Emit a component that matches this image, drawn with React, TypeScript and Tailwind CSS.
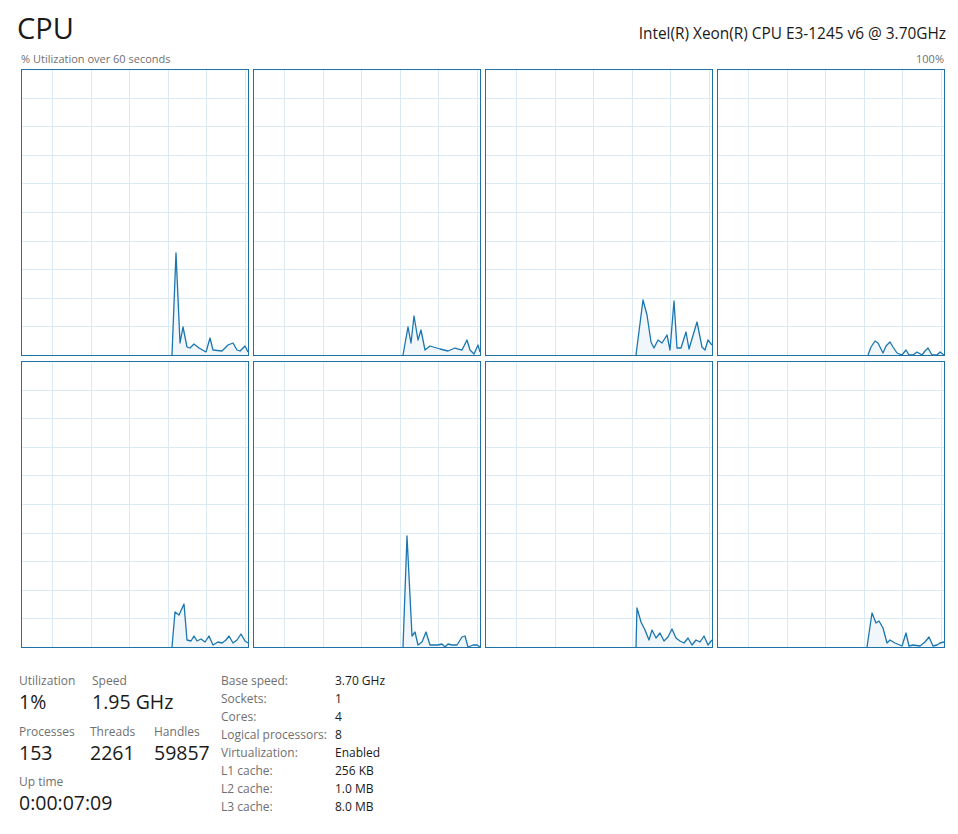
import React from 'react';

type Pt = [number, number];

const graphs: Pt[][] = [
  [[151,286],[155,184],[159,274],[162,258],[166,278],[169,279],[173,275],[178,279],[185,283],[189,269],[192,281],[201,282],[207,276],[212,274],[216,281],[219,282],[224,277],[227,283]],
  [[150,286],[155,258],[158,274],[161,247],[165,271],[168,261],[172,281],[177,277],[187,280],[195,282],[202,279],[209,281],[214,271],[217,281],[221,285],[225,276],[227,283]],
  [[151,286],[158,231],[162,246],[166,273],[169,279],[173,271],[177,274],[182,266],[185,281],[189,232],[192,279],[196,279],[201,263],[204,280],[212,253],[217,278],[220,281],[223,271],[227,276]],
  [[151,286],[154,278],[158,272],[161,274],[166,284],[169,277],[173,273],[176,278],[180,284],[185,286],[189,281],[192,286],[196,286],[200,283],[205,286],[208,282],[211,279],[215,286],[220,286],[223,283],[227,286]],
  [[151,286],[154,251],[158,254],[163,243],[166,279],[170,280],[173,275],[176,280],[180,278],[184,281],[188,275],[192,284],[197,281],[201,282],[205,279],[208,275],[212,282],[216,279],[220,273],[224,280],[227,282]],
  [[150,286],[154,175],[159,275],[162,271],[165,284],[169,281],[173,271],[177,284],[185,284],[189,283],[192,286],[195,283],[199,284],[204,284],[209,276],[212,275],[215,286],[220,284],[224,284],[227,286]],
  [[151,286],[152,247],[156,261],[160,269],[164,279],[167,269],[171,277],[175,272],[179,280],[183,276],[187,268],[191,277],[195,280],[199,282],[203,277],[207,284],[211,279],[215,281],[219,275],[223,284],[227,279]],
  [[150,286],[155,252],[159,262],[162,260],[166,267],[170,282],[173,279],[178,282],[185,285],[189,272],[192,285],[196,284],[203,285],[208,281],[212,276],[216,285],[220,284],[223,282],[227,281]],
];

const vLines = [31, 69.6, 108.2, 146.8, 185.4, 224];
const hLines = [1, 2, 3, 4, 5, 6, 7, 8, 9].map((i) => i * 28.6);

function CoreGraph({ points }: { points: Pt[] }) {
  const line = points.map(([x, y]) => `${x},${y}`).join(' ');
  const area = `${points[0][0]},286 ${line} ${points[points.length - 1][0]},286`;
  return (
    <div className="h-[287px] w-[228px] border border-[#1f72a8] bg-white">
      <svg width="226" height="285" viewBox="1 1 226 285" className="block">
        {vLines.map((x) => (
          <line key={'v' + x} x1={Math.round(x) + 0.5} x2={Math.round(x) + 0.5} y1={0} y2={287} stroke="#d9eaf4" strokeWidth={1} />
        ))}
        {hLines.map((y) => (
          <line key={'h' + y} y1={Math.round(y) + 0.5} y2={Math.round(y) + 0.5} x1={0} x2={228} stroke="#d9eaf4" strokeWidth={1} />
        ))}
        <polygon points={area} fill="#f1f6fa" />
        <polyline points={line} fill="none" stroke="#1a76b0" strokeWidth={1.3} strokeLinejoin="round" />
      </svg>
    </div>
  );
}

function Stat({ label, value, w }: { label: string; value: string; w: string }) {
  return (
    <div className={w}>
      <div className="text-[12px] leading-[16px] text-[#707070]">{label}</div>
      <div className="text-[19.5px] leading-[26px] text-[#1a1a1a]">{value}</div>
    </div>
  );
}

const specs: [string, string][] = [
  ['Base speed:', '3.70 GHz'],
  ['Sockets:', '1'],
  ['Cores:', '4'],
  ['Logical processors:', '8'],
  ['Virtualization:', 'Enabled'],
  ['L1 cache:', '256 KB'],
  ['L2 cache:', '1.0 MB'],
  ['L3 cache:', '8.0 MB'],
];

export default function App() {
  return (
    <div className="h-[834px] w-[958px] overflow-hidden bg-white font-['Segoe_UI','Open_Sans',sans-serif] text-[#1a1a1a]">
      <div className="flex items-baseline justify-between pl-[17px] pr-[12px] pt-[10px]">
        <div className="text-[29px] leading-[36px]">CPU</div>
        <div className="text-[15.4px]">Intel(R) Xeon(R) CPU E3-1245 v6 @ 3.70GHz</div>
      </div>
      <div className="mt-[6px] flex justify-between pl-[21px] pr-[14px] text-[11px] leading-[14px] text-[#707070]">
        <span>% Utilization over 60 seconds</span>
        <span>100%</span>
      </div>
      <div className="mt-[3px] grid grid-cols-[repeat(4,228px)] gap-x-[4px] gap-y-[5px] pl-[21px]">
        {graphs.map((g, i) => (
          <CoreGraph key={i} points={g} />
        ))}
      </div>
      <div className="mt-[25px] flex pl-[19px]">
        <div className="w-[202px]">
          <div className="flex">
            <Stat label="Utilization" value="1%" w="w-[73px]" />
            <Stat label="Speed" value="1.95 GHz" w="w-[100px]" />
          </div>
          <div className="mt-[9px] flex">
            <Stat label="Processes" value="153" w="w-[71px]" />
            <Stat label="Threads" value="2261" w="w-[64px]" />
            <Stat label="Handles" value="59857" w="w-[64px]" />
          </div>
          <div className="mt-[8px]">
            <Stat label="Up time" value="0:00:07:09" w="w-[150px]" />
          </div>
        </div>
        <div className="-mt-[1px] grid grid-cols-[114px_auto] text-[12px] leading-[18px]">
          {specs.map(([k, v]) => (
            <React.Fragment key={k}>
              <div className="text-[#707070]">{k}</div>
              <div className="text-[#1a1a1a]">{v}</div>
            </React.Fragment>
          ))}
        </div>
      </div>
    </div>
  );
}
